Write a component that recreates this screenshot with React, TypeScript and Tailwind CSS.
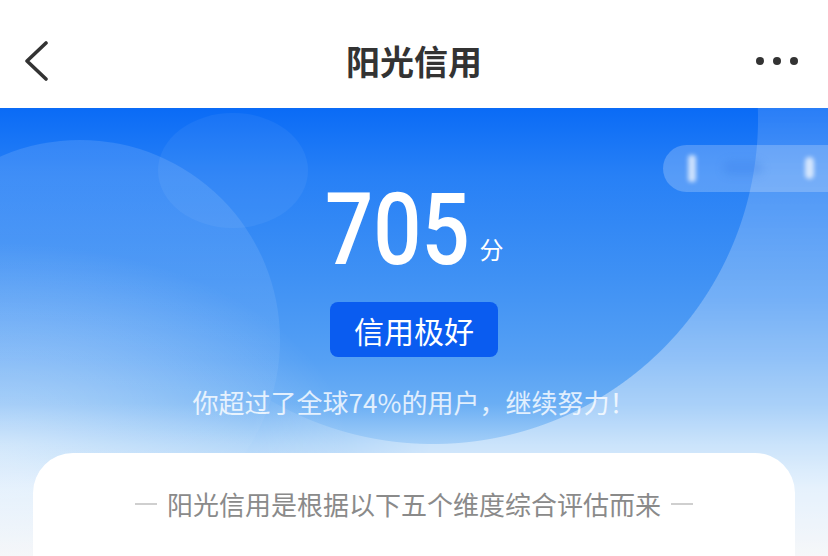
import React from "react";

export default function App() {
  const cjk = { fontFamily: '"Noto Sans CJK SC", "Noto Sans", sans-serif' };
  return (
    <div className="w-[828px] h-[556px] overflow-hidden flex flex-col bg-[#f2f4f7]" style={cjk}>
      {/* Header */}
      <div className="h-[108px] shrink-0 bg-white flex items-center pt-[14px]">
        <div className="w-[120px] pl-[22px] flex items-center">
          <svg width="30" height="40" viewBox="0 0 30 40">
            <polyline points="24,2 5,20 24,38" fill="none" stroke="#333333" strokeWidth="3.6" strokeLinecap="round" strokeLinejoin="round" />
          </svg>
        </div>
        <div className="flex-1 text-center text-[34px] font-bold text-[#333333] leading-none">阳光信用</div>
        <div className="w-[120px] pr-[30px] flex items-center justify-end gap-[8.5px]">
          <span className="w-[8.5px] h-[8.5px] rounded-full bg-[#333333]" />
          <span className="w-[8.5px] h-[8.5px] rounded-full bg-[#333333]" />
          <span className="w-[8.5px] h-[8.5px] rounded-full bg-[#333333]" />
        </div>
      </div>

      {/* Blue section */}
      <div className="relative flex-1 overflow-hidden bg-[linear-gradient(to_bottom,#0a6bf6_0%,#2780f6_15%,#3f91f4_38%,#55a0f4_56%,#6aaef4_66%,#a4cff8_75%,#d6e9fb_85%,#f2f4f7_100%)]">
        {/* outside-of-big-circle lighter region (right side) */}
        <div className="absolute inset-0 [mask-image:linear-gradient(to_bottom,rgba(0,0,0,0.13),rgba(0,0,0,0.26)_43%,rgba(0,0,0,0.42)_65%,rgba(0,0,0,0.42)_80%,rgba(0,0,0,0.3))]">
          <div className="absolute inset-0 bg-[radial-gradient(circle_325px_at_433px_11px,transparent_324.5px,#ffffff_325.5px)] [mask-image:linear-gradient(to_right,transparent_250px,#000_430px)]" />
        </div>
        {/* bottom-left soft light */}
        <div className="absolute inset-0 bg-[radial-gradient(ellipse_350px_210px_at_0px_345px,rgba(255,255,255,0.48),rgba(255,255,255,0.22)_55%,rgba(255,255,255,0))]" />
        {/* left big circle */}
        <div className="absolute left-[-120px] top-[32px] w-[400px] h-[400px] rounded-full bg-[linear-gradient(to_bottom,rgba(255,255,255,0.12),rgba(255,255,255,0.07)_50%,rgba(255,255,255,0))]" />
        {/* small circle */}
        <div className="absolute left-[158px] top-[5px] w-[150px] h-[115px] rounded-[50%] bg-white/[0.05]" />
        {/* blurred pill */}
        <div className="absolute left-[663px] top-[37px] h-[47px] w-[200px] rounded-l-full bg-white/[0.22] overflow-hidden">
          <div className="absolute left-[25px] top-[10px] w-[8px] h-[27px] rounded-[3px] bg-white/70 blur-[2px]" />
          <div className="absolute left-[60px] top-[16px] w-[40px] h-[14px] rounded-full bg-[#2a6fe0]/20 blur-[4px]" />
          <div className="absolute left-[142px] top-[12px] w-[9px] h-[22px] rounded-full bg-white/70 blur-[2px]" />
        </div>

        {/* content */}
        <div className="relative z-10 flex flex-col items-center">
          <div className="mt-[72px] flex items-baseline">
            <span
              className="inline-block w-[145px] whitespace-nowrap origin-left scale-x-[0.85] text-[100px] leading-none font-medium text-white"
              style={{ fontFamily: 'Roboto, "Liberation Sans", sans-serif' }}
            >
              705
            </span>
            <span className="ml-[10px] text-[24px] leading-none text-white -translate-y-[5px]">分</span>
          </div>
          <div className="mt-[22px] w-[168px] h-[55px] rounded-[8px] bg-[#0a5cf0] flex items-center justify-center text-white text-[30px] leading-none">
            信用极好
          </div>
          <div className="mt-[28px] text-[26px] leading-[34px] text-white/80">
            你超过了全球74%的用户，继续努力！
          </div>
          <div className="mt-[34px] self-stretch mx-[33px] h-[200px] rounded-t-[40px] bg-white flex justify-center">
            <div className="mt-[34px] flex items-center h-[34px] gap-[10px]">
              <span className="w-[22px] h-[1.5px] bg-[#cfcfcf]" />
              <span className="text-[26px] leading-[34px] text-[#8a8a8a]">阳光信用是根据以下五个维度综合评估而来</span>
              <span className="w-[22px] h-[1.5px] bg-[#cfcfcf]" />
            </div>
          </div>
        </div>
      </div>
    </div>
  );
}
